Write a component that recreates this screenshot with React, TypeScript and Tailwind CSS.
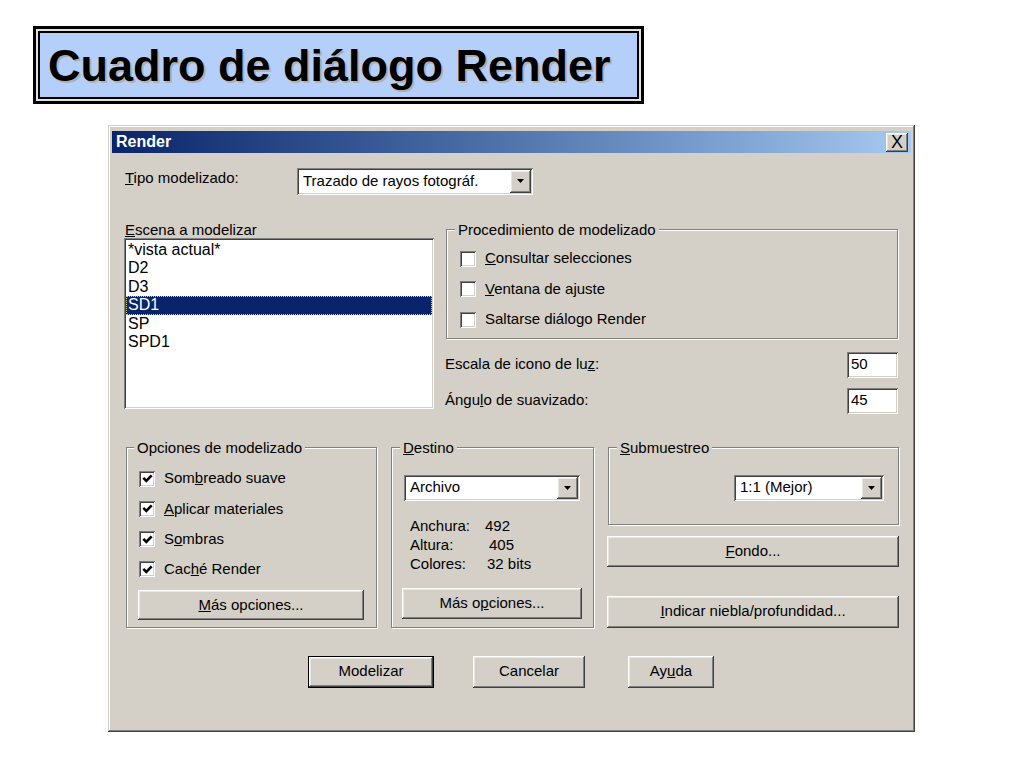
import type { ReactNode } from 'react'

const RAISED =
  'bg-[#d4d0c8] shadow-[inset_-1px_-1px_0_#404040,inset_1px_1px_0_#ffffff,inset_-2px_-2px_0_#808080,inset_2px_2px_0_#e8e6e0]'
const SUNKEN =
  'bg-white shadow-[inset_1px_1px_0_#808080,inset_-1px_-1px_0_#ffffff,inset_2px_2px_0_#404040,inset_-2px_-2px_0_#d4d0c8]'
const GROUP =
  'border border-[#808080] shadow-[1px_1px_0_#ffffff,inset_1px_1px_0_#ffffff]'

const SCENES = ['*vista actual*', 'D2', 'D3', 'SD1', 'SP', 'SPD1']

function Arrow() {
  return (
    <svg width="7" height="4" viewBox="0 0 7 4">
      <path d="M0 0h7L3.5 4z" fill="#000" />
    </svg>
  )
}

function Combo({ text, className }: { text: string; className: string }) {
  return (
    <div className={`flex p-[2px] ${SUNKEN} ${className}`}>
      <span className="flex flex-1 items-center pl-[4px]">{text}</span>
      <span className={`flex w-[21px] items-center justify-center ${RAISED}`}>
        <Arrow />
      </span>
    </div>
  )
}

function Check({ checked, children }: { checked?: boolean; children: ReactNode }) {
  return (
    <div className="flex h-4 items-center">
      <span className={`flex h-4 w-4 shrink-0 items-center justify-center ${SUNKEN}`}>
        {checked && (
          <svg width="11" height="11" viewBox="0 0 10 10">
            <path d="M1.2 4.4L3.9 7.1L8.8 2.2" stroke="#000" strokeWidth="2.4" fill="none" />
          </svg>
        )}
      </span>
      <span className="ml-[9px]">{children}</span>
    </div>
  )
}

function Btn({ children, className }: { children: ReactNode; className: string }) {
  return (
    <button type="button" className={`flex items-center justify-center ${RAISED} ${className}`}>
      {children}
    </button>
  )
}

function Legend({ children, className }: { children: ReactNode; className: string }) {
  return <legend className={`px-[3px] leading-[17px] bg-[#d4d0c8] ${className}`}>{children}</legend>
}

export default function App() {
  return (
    <div className="h-[768px] w-[1024px] overflow-hidden bg-white pt-[26px] font-['Liberation_Sans',Arial,sans-serif]">
      {/* slide title */}
      <div className="ml-[33px] h-[78px] w-[611px] border-[3px] border-black bg-[#e2e2e2] p-[2px]">
        <div className="flex h-full items-center border-2 border-black bg-[#b4cffa] pl-[8px]">
          <h1 className="text-[45px] leading-none font-bold text-black [text-shadow:2px_2px_0_#b0b0b0]">
            Cuadro de diálogo Render
          </h1>
        </div>
      </div>

      {/* dialog window */}
      <div className="mt-[21px] ml-[108px] h-[607px] w-[807px] bg-[#d4d0c8] px-[4px] pt-[6px] text-[15px] text-black shadow-[inset_-1px_-1px_0_#404040,inset_1px_1px_0_#d4d0c8,inset_-2px_-2px_0_#808080,inset_2px_2px_0_#ffffff]">
        <div className="flex h-[22px] items-center justify-between bg-linear-to-r from-[#0a246a] to-[#a6caf0] pl-[4px] pr-[3px]">
          <span className="text-[16px] font-bold text-white">Render</span>
          <span className={`flex h-[19px] w-[22px] items-center justify-center text-[18px] leading-none ${RAISED}`}>
            X
          </span>
        </div>

        {/* tipo */}
        <div className="mt-[14px] flex items-center pl-[13px]">
          <span className="mb-[6px] w-[172px]">
            <u>T</u>ipo modelizado:
          </span>
          <Combo text="Trazado de rayos fotográf." className="h-[27px] w-[236px]" />
        </div>

        {/* escena + procedimiento */}
        <div className="mt-[25px] flex pl-[12px]">
          <div className="w-[310px]">
            <div className="h-[17px] pl-[1px] leading-[17px]">
              <u>E</u>scena a modelizar
            </div>
            <div className={`h-[171px] w-[310px] p-[2px] pt-[3px] text-[16px] ${SUNKEN}`}>
              {SCENES.map((s) => (
                <div
                  key={s}
                  className={
                    s === 'SD1'
                      ? 'h-[18.6px] bg-[#0a246a] pl-[2px] leading-[18.6px] text-white outline-1 -outline-offset-1 outline-dotted outline-[#d8d088]'
                      : 'h-[18.6px] pl-[2px] leading-[18.6px]'
                  }
                >
                  {s}
                </div>
              ))}
            </div>
          </div>

          <div className="ml-[11px] w-[454px]">
            <fieldset className={`ml-[1px] h-[118px] w-[452px] ${GROUP}`}>
              <Legend className="ml-[8px]">Procedimiento de modelizado</Legend>
              <div className="flex flex-col gap-[14.5px] pt-[13px] pl-[13px]">
                <Check>
                  <u>C</u>onsultar selecciones
                </Check>
                <Check>
                  <u>V</u>entana de ajuste
                </Check>
                <Check>Saltarse diálogo Render</Check>
              </div>
            </fieldset>
            <div className="mt-[13px] flex h-[26px] items-center justify-between">
              <span>
                Escala de icono de lu<u>z</u>:
              </span>
              <div className={`mr-[1px] flex h-[26px] w-[51px] items-center pl-[4px] ${SUNKEN}`}>50</div>
            </div>
            <div className="mt-[10px] flex h-[26px] items-center justify-between">
              <span>
                Ángu<u>l</u>o de suavizado:
              </span>
              <div className={`mr-[1px] flex h-[26px] w-[51px] items-center pl-[4px] ${SUNKEN}`}>45</div>
            </div>
          </div>
        </div>

        {/* opciones / destino / submuestreo */}
        <div className="mt-[25px] flex pl-[14px]">
          <fieldset className={`h-[189px] w-[251px] ${GROUP}`}>
            <Legend className="ml-[7px]">Opciones de modelizado</Legend>
            <div className="flex flex-col gap-[14.3px] pt-[15px] pl-[12px]">
              <Check checked>
                Som<u>b</u>reado suave
              </Check>
              <Check checked>
                <u>A</u>plicar materiales
              </Check>
              <Check checked>
                S<u>o</u>mbras
              </Check>
              <Check checked>
                Cac<u>h</u>é Render
              </Check>
            </div>
            <Btn className="mt-[13px] ml-[11px] h-[30px] w-[226px]">
              <span>
                <u>M</u>ás opciones...
              </span>
            </Btn>
          </fieldset>

          <fieldset className={`ml-[14px] h-[189px] w-[203px] ${GROUP}`}>
            <Legend className="ml-[8px]">
              <u>D</u>estino
            </Legend>
            <div className="pt-[19px] pl-[12px]">
              <Combo text="Archivo" className="h-[26px] w-[176px]" />
            </div>
            <div className="mt-[15.5px] pl-[18px] leading-[19px]">
              <div className="flex">
                <span className="w-[75px]">Anchura:</span>
                <span>492</span>
              </div>
              <div className="flex">
                <span className="w-[75px]">Altura:</span>
                <span className="ml-[4px]">405</span>
              </div>
              <div className="flex">
                <span className="w-[75px]">Colores:</span>
                <span className="ml-[2px]">32 bits</span>
              </div>
            </div>
            <Btn className="mt-[14.5px] ml-[10px] h-[31px] w-[180px]">
              <span>
                Más o<u>p</u>ciones...
              </span>
            </Btn>
          </fieldset>

          <div className="ml-[13px] w-[292px]">
            <fieldset className={`ml-[1px] h-[86px] w-[291px] ${GROUP}`}>
              <Legend className="ml-[8px]">
                <u>S</u>ubmuestreo
              </Legend>
              <div className="pt-[19px] pl-[125px]">
                <Combo text="1:1 (Mejor)" className="h-[26px] w-[150px]" />
              </div>
            </fieldset>
            <Btn className="mt-[11px] h-[31px] w-full">
              <span>
                <u>F</u>ondo...
              </span>
            </Btn>
            <Btn className="mt-[29px] h-[32px] w-full">
              <span>
                <u>I</u>ndicar niebla/profundidad...
              </span>
            </Btn>
          </div>
        </div>

        {/* bottom buttons */}
        <div className="mt-[28px] flex pl-[196px]">
          <Btn className="h-[32px] w-[126px] border border-black">Modelizar</Btn>
          <Btn className="ml-[39px] h-[32px] w-[112px]">Cancelar</Btn>
          <Btn className="ml-[43px] h-[32px] w-[86px]">
            <span>
              Ay<u>u</u>da
            </span>
          </Btn>
        </div>
      </div>
    </div>
  )
}
